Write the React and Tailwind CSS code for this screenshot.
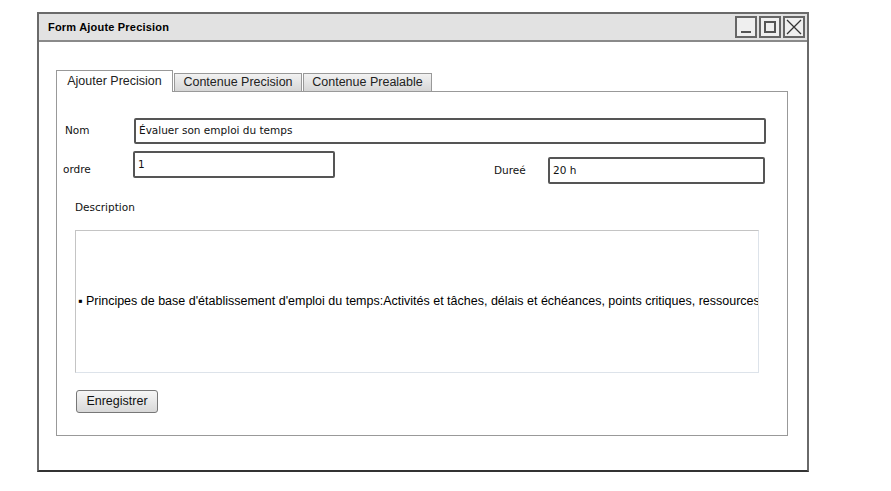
import React from "react";

const sketch = { fontFamily: '"DejaVu Sans", "Liberation Sans", sans-serif' };
const arial = { fontFamily: '"Liberation Sans", Arial, sans-serif' };

function WinButton({ children }) {
    return (
        <div className="w-[22px] h-[22px] border-2 border-[#666] bg-[#efefef] flex items-center justify-center">
            {children}
        </div>
    );
}

function Tab({ label, active, width }) {
    if (active) {
        return (
            <div
                className="h-[22px] bg-white border border-b-0 border-[#999] flex items-center justify-center text-[12.5px] text-[#222] -mb-px relative z-10"
                style={{ ...arial, width }}
            >
                {label}
            </div>
        );
    }
    return (
        <div
            className="h-[18px] bg-gradient-to-b from-[#f2f2f2] to-[#d6d6d6] border border-b-0 border-[#999] flex items-center justify-center text-[12.5px] text-[#222] ml-px"
            style={{ ...arial, width }}
        >
            {label}
        </div>
    );
}

function Field({ value, className }) {
    return (
        <div
            className={"border-2 border-[#555] rounded-[2px] bg-white flex items-center pl-[3px] text-[10.5px] text-[#111] " + className}
            style={sketch}
        >
            {value}
        </div>
    );
}

export default function App() {
    return (
        <div className="w-[891px] h-[491px] bg-white pt-[12px] pl-[37px]">
            <div className="w-[772px] h-[460px] border-2 border-[#6a6a6a] border-b-[#333] flex flex-col">
                <div className="h-[28px] bg-[#e2e2e2] border-b-2 border-[#8a8a8a] flex items-center justify-between pl-[9px] pr-[2px]">
                    <span className="text-[11px] font-bold text-black tracking-[0.2px]" style={arial}>Form Ajoute Precision</span>
                    <div className="flex gap-[2px]">
                        <WinButton>
                            <div className="w-[10px] h-[2px] bg-[#555] mt-[10px]" />
                        </WinButton>
                        <WinButton>
                            <div className="w-[12px] h-[12px] border-2 border-[#555]" />
                        </WinButton>
                        <WinButton>
                            <svg width="16" height="16" viewBox="0 0 16 16">
                                <path d="M1 1 L15 15 M15 1 L1 15" stroke="#333" strokeWidth="1.3" fill="none" />
                            </svg>
                        </WinButton>
                    </div>
                </div>

                <div className="pl-[17px] pt-[28px] pr-[19px]">
                    <div className="flex items-end">
                        <Tab label="Ajouter Precision" active width={117} />
                        <Tab label="Contenue Precision" width={128} />
                        <Tab label="Contenue Prealable" width={129} />
                    </div>
                    <div className="h-[345px] border border-[#999] flex flex-col">
                        <div className="flex items-center mt-[26px]">
                            <span className="w-[77px] pl-[8px] text-[10.5px] text-[#111]" style={sketch}>Nom</span>
                            <Field value="Évaluer son emploi du temps" className="w-[632px] h-[26px]" />
                        </div>
                        <div className="flex items-start mt-[7px]">
                            <div className="flex items-center">
                                <span className="w-[76px] pl-[6px] pt-[10px] text-[10.5px] text-[#111]" style={sketch}>ordre</span>
                                <Field value="1" className="w-[202px] h-[27px]" />
                            </div>
                            <div className="flex items-center mt-[6px] ml-[159px]">
                                <span className="w-[54px] text-[10.5px] text-[#111]" style={sketch}>Dureé</span>
                                <Field value="20 h" className="w-[217px] h-[27px]" />
                            </div>
                        </div>
                        <span className="ml-[18px] mt-[16px] text-[10.5px] text-[#111]" style={sketch}>Description</span>
                        <div className="ml-[18px] mt-[14px] w-[684px] h-[143px] border border-[#c4c4c4] border-r-[#dde3ea] border-b-[#dde3ea] flex items-center overflow-hidden">
                            <span className="whitespace-nowrap pl-[2px] text-[12.5px] text-black" style={arial}>
                                ▪ Principes de base d'établissement d'emploi du temps:Activités et tâches, délais et échéances, points critiques, ressources
                            </span>
                        </div>
                        <div className="ml-[19px] mt-[14px]">
                            <button
                                className="w-[82px] h-[23px] border border-[#777] rounded-[3px] bg-gradient-to-b from-[#f6f6f6] to-[#d8d8d8] text-[12.5px] text-[#111]"
                                style={arial}
                            >
                                Enregistrer
                            </button>
                        </div>
                    </div>
                </div>
            </div>
        </div>
    );
}
